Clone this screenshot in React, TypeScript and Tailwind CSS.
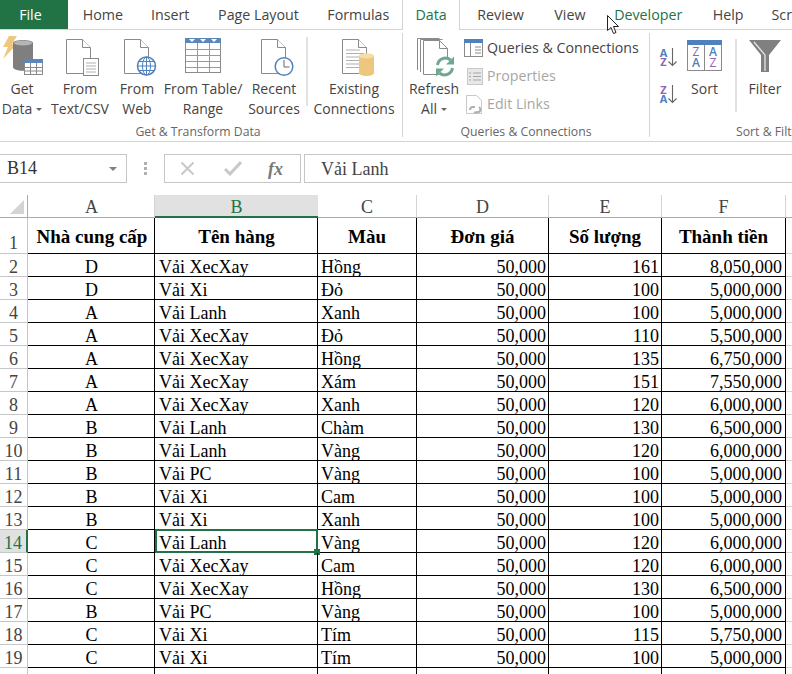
import React from "react";

const ui = "[font-family:'Open_Sans','Noto_Sans',sans-serif]";
const serif = "[font-family:'Liberation_Serif','Times_New_Roman',serif]";

const rows: [string, string, string, string, string, string, string][] = [
  ["2", "D", "Vải XecXay", "Hồng", "50,000", "161", "8,050,000"],
  ["3", "D", "Vải Xi", "Đỏ", "50,000", "100", "5,000,000"],
  ["4", "A", "Vải Lanh", "Xanh", "50,000", "100", "5,000,000"],
  ["5", "A", "Vải XecXay", "Đỏ", "50,000", "110", "5,500,000"],
  ["6", "A", "Vải XecXay", "Hồng", "50,000", "135", "6,750,000"],
  ["7", "A", "Vải XecXay", "Xám", "50,000", "151", "7,550,000"],
  ["8", "A", "Vải XecXay", "Xanh", "50,000", "120", "6,000,000"],
  ["9", "B", "Vải Lanh", "Chàm", "50,000", "130", "6,500,000"],
  ["10", "B", "Vải Lanh", "Vàng", "50,000", "120", "6,000,000"],
  ["11", "B", "Vải PC", "Vàng", "50,000", "100", "5,000,000"],
  ["12", "B", "Vải Xi", "Cam", "50,000", "100", "5,000,000"],
  ["13", "B", "Vải Xi", "Xanh", "50,000", "100", "5,000,000"],
  ["14", "C", "Vải Lanh", "Vàng", "50,000", "120", "6,000,000"],
  ["15", "C", "Vải XecXay", "Cam", "50,000", "120", "6,000,000"],
  ["16", "C", "Vải XecXay", "Hồng", "50,000", "130", "6,500,000"],
  ["17", "B", "Vải PC", "Vàng", "50,000", "100", "5,000,000"],
  ["18", "C", "Vải Xi", "Tím", "50,000", "115", "5,750,000"],
  ["19", "C", "Vải Xi", "Tím", "50,000", "100", "5,000,000"],
];

const GRID = "grid grid-cols-[28px_127px_163px_99px_132px_113px_124px_6px]";

function Doc({ children, w = 34 }: { children?: React.ReactNode; w?: number }) {
  return (
    <svg width={w} height="39" viewBox={`0 0 ${w} 39`} fill="none">
      <path d="M0.500 0.500h16l8 8v26h-24z" fill="#fff" stroke="#8a8a8a" />
      <path d="M16.500 0.500v8h8" stroke="#8a8a8a" fill="#fff" />
      {children}
    </svg>
  );
}

const GetDataIcon = () => (
  <svg width="44" height="40" viewBox="0 0 44 40">
    <path d="M9 0h8l-5 8h5L3 23l5-12H3z" fill="#edc87e" />
    <path d="M13 7c0-4 20-4 20 0v24c0 5-20 5-20 0z" fill="#7f7f7f" />
    <ellipse cx="23" cy="7" rx="9" ry="2.600" fill="#b5b5b5" />
    <rect x="24.500" y="23.500" width="18" height="15" fill="#fff" stroke="#8a8a8a" />
    <rect x="24" y="23" width="19" height="4" fill="#5b87b9" />
    <path d="M24 31.500h19M24 35h19M30.500 27v12M36.500 27v12" stroke="#8a8a8a" />
  </svg>
);

const TableIcon = () => (
  <svg width="36" height="35" viewBox="0 0 36 35">
    <rect x="0.500" y="0.500" width="35" height="34" fill="#fff" stroke="#8a8a8a" />
    <rect x="0" y="0" width="36" height="5" fill="#5b87b9" />
    <path d="M4 1h6l-3 3zM15 1h6l-3 3zM26 1h6l-3 3z" fill="#fff" />
    <path d="M0.500 11.500h35M0.500 17.500h35M0.500 23.500h35M0.500 29.500h35M12.500 5v30M24.500 5v30" stroke="#9a9a9a" />
  </svg>
);

const SortTableIcon = () => (
  <svg width="35" height="31" viewBox="0 0 35 31">
    <rect x="0.500" y="0.500" width="34" height="30" fill="#fff" stroke="#8a8a8a" />
    <rect x="0" y="0" width="35" height="5" fill="#4f81bd" />
    <path d="M17.500 5v26" stroke="#8a8a8a" />
    <g fontFamily="'Open Sans',sans-serif" fontSize="12" textAnchor="middle">
      <text x="9" y="15.500" fill="#9162b4">Z</text>
      <text x="9" y="27" fontWeight="600" fill="#4f81bd">A</text>
      <text x="26" y="15.500" fontWeight="600" fill="#4f81bd">A</text>
      <text x="26" y="27" fill="#9162b4">Z</text>
    </g>
  </svg>
);

const SortSmall = ({ top, bottom, topC, botC }: { top: string; bottom: string; topC: string; botC: string }) => (
  <svg width="18" height="19" viewBox="0 0 18 19">
    <g fontFamily="'Open Sans',sans-serif" fontSize="11" fontWeight="700" textAnchor="middle">
      <text x="4.500" y="9" fill={topC}>{top}</text>
      <text x="4.500" y="18" fill={botC}>{bottom}</text>
    </g>
    <path d="M13.500 0v17.500M9.500 13.500l4 4 4-4" fill="none" stroke="#666" strokeWidth="1.100" />
  </svg>
);

const FilterIcon = () => (
  <svg width="32" height="32" viewBox="0 0 32 32">
    <path d="M0 0h32L20 15v17h-8V15z" fill="#808080" />
    <path d="M5 2l11 13v16" fill="none" stroke="#e4e4e4" strokeWidth="1.300" />
  </svg>
);

const RefreshIcon = () => (
  <svg width="38" height="39" viewBox="0 0 38 39" fill="none">
    <path d="M0.500 32V0.500h22" fill="none" stroke="#8a8a8a" />
    <path d="M3.500 34V1.500h22" fill="none" stroke="#8a8a8a" />
    <path d="M6.500 2.500h16l8 8v26h-24z" fill="#fff" stroke="#8a8a8a" />
    <path d="M22.500 2.500v8h8" stroke="#8a8a8a" />
    <circle cx="28" cy="28.500" r="10" fill="#fff" />
    <path d="M20.500 27a8 8 0 0 1 13-5" stroke="#6fa88f" strokeWidth="3" />
    <path d="M37 18.500v8h-8z" fill="#6fa88f" />
    <path d="M35.500 30a8 8 0 0 1-13 5" stroke="#6fa88f" strokeWidth="3" />
    <path d="M19 38.500v-8h8z" fill="#6fa88f" />
  </svg>
);

function Big({ icon, l1, l2, w, caret, iconClass }: { icon: React.ReactNode; l1: string; l2: string; w: string; caret?: boolean; iconClass?: string }) {
  return (
    <div className={`${w} flex flex-col items-center shrink-0`}>
      <div className={`h-[41px] flex items-start justify-center ${iconClass ?? ""}`}>{icon}</div>
      <div className="mt-[2px] text-[14px] leading-[20px] text-[#444] text-center whitespace-nowrap">
        <div>{l1}</div>
        <div className="flex items-center justify-center gap-[4px]">
          {l2}
          {caret && <span className="w-0 h-0 border-x-[3px] border-x-transparent border-t-[3px] border-t-[#666]" />}
        </div>
      </div>
    </div>
  );
}

function SmallRow({ icon, label, dim }: { icon: React.ReactNode; label: string; dim?: boolean }) {
  return (
    <div className={`h-[28px] flex items-center gap-[4px] text-[14.200px] whitespace-nowrap ${dim ? "text-[#a6a6a6]" : "text-[#444]"}`}>
      <span className="w-[19px] h-[20px] flex items-center justify-end">{icon}</span>
      {label}
    </div>
  );
}

const label = "text-[12.250px] leading-[16px] text-[#666] whitespace-nowrap mt-[1px]";

function Ribbon() {
  return (
    <div className="h-[112px] border-b border-[#d4d4d4] flex pt-[6px]">
      <div className="w-[402px] shrink-0 flex flex-col">
        <div className="flex h-[87px]">
          <Big w="w-[44px]" icon={<GetDataIcon />} l1="Get" l2="Data" caret />
          <Big w="w-[72px]" iconClass="pt-[3px] pl-[6px]" icon={<Doc><rect x="17.500" y="19.500" width="15" height="17" fill="#fff" stroke="#8a8a8a" /><path d="M20 24h10M20 27h10M20 30h10M20 33h10" stroke="#b0b0b0" /></Doc>} l1="From" l2="Text/CSV" />
          <Big w="w-[42px]" iconClass="pt-[3px] pl-[8px]" icon={<Doc><circle cx="22.500" cy="27" r="9" fill="#fff" stroke="#4f81bd" strokeWidth="1.500" /><path d="M13.500 27h18M22.500 18v18M15 22.500h15M15 31.500h15" stroke="#4f81bd" /><ellipse cx="22.500" cy="27" rx="4" ry="9" fill="none" stroke="#4f81bd" /></Doc>} l1="From" l2="Web" />
          <Big w="w-[90px]" iconClass="pt-[2px]" icon={<TableIcon />} l1="From Table/" l2="Range" />
          <Big w="w-[52px]" iconClass="pt-[3px] pl-[7px]" icon={<Doc><circle cx="23" cy="27.500" r="8.800" fill="#fff" stroke="#4f81bd" strokeWidth="1.500" /><path d="M23 21v7h5.500" fill="none" stroke="#666" /></Doc>} l1="Recent" l2="Sources" />
          <div className="w-[2px] h-[69px] mt-[1px] ml-[6px] bg-[#e1e1e1] shrink-0" />
          <Big w="w-[92px]" iconClass="pt-[3px] pl-[10px]" icon={<Doc><path d="M4 11h14M4 14.500h18M4 18h18M4 21.500h14M4 25h14M4 28.500h14" stroke="#b0b0b0" /><path d="M17 17c0-3 15-3 15 0v17c0 4-15 4-15 0z" fill="#eec77f" /><ellipse cx="24.500" cy="17" rx="7.500" ry="2.600" fill="#f6dca8" /></Doc>} l1="Existing" l2="Connections" />
        </div>
        <div className={`${label} text-center pr-[6px]`}>Get &amp; Transform Data</div>
      </div>
      <div className="w-px h-[104px] -mt-[3px] bg-[#d4d4d4] shrink-0" />
      <div className="w-[246px] shrink-0 flex flex-col">
        <div className="h-[87px] flex">
          <div className="pl-[6px]">
            <Big w="w-[50px]" iconClass="pt-[2px] pl-[4px]" icon={<RefreshIcon />} l1="Refresh" l2="All" caret />
          </div>
          <div className="ml-[5px] -mt-[2px] flex flex-col">
            <SmallRow label="Queries & Connections" icon={<svg width="19" height="18"><rect x="0.500" y="0.500" width="18" height="17" fill="#fff" stroke="#8a8a8a" /><rect width="19" height="4" fill="#4f81bd" /><path d="M11 8h6M11 11h6M11 14h6M6.500 4v14" stroke="#8a8a8a" /></svg>} />
            <SmallRow dim label="Properties" icon={<svg width="16" height="17"><rect x="0.500" y="0.500" width="15" height="16" fill="#e8e8e8" stroke="#c8c8c8" /><path d="M6 5h8M6 8.500h8M6 12h8M2 5h2M2 8.500h2M2 12h2" stroke="#a6a6a6" /></svg>} />
            <SmallRow dim label="Edit Links" icon={<svg width="17" height="19"><path d="M0.500 0.500h10l5 5v13h-15z" fill="#fff" stroke="#c8c8c8" /><path d="M4 15a3 3 0 0 1 3-3h2M8 17a3 3 0 0 0 3 0h2a3 3 0 0 0 0-5" fill="none" stroke="#b0b0b0" strokeWidth="2" /></svg>} />
          </div>
        </div>
        <div className={`${label} text-center`}>Queries &amp; Connections</div>
      </div>
      <div className="w-px h-[104px] -mt-[3px] bg-[#d4d4d4] shrink-0" />
      <div className="grow overflow-hidden flex flex-col">
        <div className="h-[87px] flex">
          <div className="pl-[9px] pt-[12px] flex flex-col gap-[18px] w-[28px] shrink-0">
            <SortSmall top="A" bottom="Z" topC="#4f81bd" botC="#9162b4" />
            <SortSmall top="Z" bottom="A" topC="#9162b4" botC="#4f81bd" />
          </div>
          <div className="w-[53px] shrink-0 flex flex-col items-center">
            <div className="h-[41px] pt-[4px]"><SortTableIcon /></div>
            <div className="text-[14px] leading-[20px] text-[#444] mt-[2px]">Sort</div>
          </div>
          <div className="w-[2px] h-[73px] ml-[4px] mt-[3px] bg-[#e1e1e1] shrink-0" />
          <div className="w-[56px] shrink-0 flex flex-col items-center">
            <div className="h-[41px] pt-[4px]"><FilterIcon /></div>
            <div className="text-[14px] leading-[20px] text-[#444] mt-[2px]">Filter</div>
          </div>
        </div>
        <div className={`${label} pl-[86px]`}>Sort &amp; Filter</div>
      </div>
    </div>
  );
}

function FormulaBar() {
  return (
    <div className="h-[29px] mt-[12px] flex items-stretch">
      <div className={`w-[127px] border border-[#c6c6c6] border-l-0 flex items-center justify-between pl-[7px] pr-[9px] ${serif} text-[18px] text-[#333]`}>
        B14
        <span className="w-0 h-0 border-x-[4px] border-x-transparent border-t-[4px] border-t-[#808080]" />
      </div>
      <div className="w-[37px] flex flex-col items-center justify-center gap-[2px]">
        <span className="w-[3px] h-[3px] bg-[#b0b0b0]" />
        <span className="w-[3px] h-[3px] bg-[#b0b0b0]" />
        <span className="w-[3px] h-[3px] bg-[#b0b0b0]" />
      </div>
      <div className="w-[137px] border border-[#c6c6c6] flex items-center">
        <svg width="15" height="15" viewBox="0 0 15 15" className="ml-[15px]">
          <path d="M1.500 1.500l12 12M13.500 1.500l-12 12" stroke="#c8c8c8" strokeWidth="2" fill="none" />
        </svg>
        <svg width="18" height="15" viewBox="0 0 18 15" className="ml-[29px]">
          <path d="M1 8l5 5 11-12" stroke="#c8c8c8" strokeWidth="3" fill="none" />
        </svg>
        <span className={`ml-[26px] ${serif} italic font-bold text-[18px] leading-[18px] text-[#777]`}>fx</span>
      </div>
      <div className="w-[3px]" />
      <div className={`grow border border-[#c6c6c6] border-r-0 flex items-center pl-[16px] pt-[1px] ${serif} text-[18px] text-[#444]`}>Vải Lanh</div>
    </div>
  );
}

function Tab({ w, children, green }: { w: string; children: React.ReactNode; green?: boolean }) {
  return <div className={`${w} flex items-center justify-center ${green ? "text-[#217346]" : ""}`}>{children}</div>;
}

function App() {
  const bc = "border-black";
  return (
    <div className={`w-[792px] h-[674px] overflow-hidden bg-white relative ${ui}`}>
      <div className="h-[30px] flex border-b border-[#d4d4d4] text-[14.250px] text-[#444] whitespace-nowrap">
        <div className="w-[68px] bg-[#217346] text-white flex items-center justify-center pr-[7px]">File</div>
        <Tab w="w-[70px]">Home</Tab>
        <Tab w="w-[65px]">Insert</Tab>
        <Tab w="w-[112px]">Page Layout</Tab>
        <Tab w="w-[88px]">Formulas</Tab>
        <div className="w-[58px] h-[30px] bg-white border-x border-[#d4d4d4] text-[#217346] flex items-center justify-center">Data</div>
        <Tab w="w-[81px]">Review</Tab>
        <Tab w="w-[58px]">View</Tab>
        <Tab w="w-[99px]" green>Developer</Tab>
        <Tab w="w-[61px]">Help</Tab>
        <div className="ml-[13px] flex items-center">Scr</div>
      </div>
      <Ribbon />
      <FormulaBar />
      <div className={`mt-[12px] ${serif} text-[18px] text-black`}>
        <div className={`${GRID} grid-rows-[23px] h-[23px] text-[#444] leading-[24px] text-center`}>
          <div className="border-r border-b border-[#ababab] relative overflow-hidden">
            <span className="absolute right-[3px] bottom-[3px] w-0 h-0 border-l-[14px] border-l-transparent border-b-[14px] border-b-[#d4d4d4]" />
          </div>
          {["A", "B", "C", "D", "E", "F"].map((c) => (
            <div key={c} className={c === "B" ? "bg-[#e1e1e1] border-b-2 border-[#217346] text-[#217346]" : c === "A" ? "border-r border-b border-[#d4d4d4] border-b-[#ababab] pl-[1px]" : "border-r border-b border-[#d4d4d4] border-b-[#ababab]"}>{c}</div>
          ))}
          <div className="border-b border-[#ababab]" />
        </div>
        <div className={`${GRID} grid-rows-[36px] h-[36px] font-bold text-[19px]`}>
          <div className="border-r border-[#c6c6c6] border-b border-b-[#c6c6c6] text-[#444] font-normal text-[18px] text-center leading-[50px]">1</div>
          <div className={`border-r border-b ${bc} text-center leading-[37px] whitespace-nowrap pl-[2px]`}>Nhà cung cấp</div>
          <div className={`border-r border-b ${bc} text-center leading-[37px] pl-[1px]`}>Tên hàng</div>
          <div className={`border-r border-b ${bc} text-center leading-[37px]`}>Màu</div>
          <div className={`border-r border-b ${bc} text-center leading-[37px]`}>Đơn giá</div>
          <div className={`border-r border-b ${bc} text-center leading-[37px]`}>Số lượng</div>
          <div className={`border-r border-b ${bc} text-center leading-[37px]`}>Thành tiền</div>
          <div className="border-b border-[#d4d4d4]" />
        </div>
        {rows.map((r) => {
          const sel = r[0] === "14";
          return (
            <div key={r[0]} className={`${GRID} grid-rows-[23px] h-[23px] leading-[26px] whitespace-nowrap`}>
              <div className={`border-b border-[#c6c6c6] text-center ${sel ? "bg-[#e1e1e1] border-r-2 border-r-[#217346] text-[#217346]" : "border-r text-[#444]"}`}>{r[0]}</div>
              <div className={`border-r border-b ${bc} text-center pl-[1px]`}>{r[1]}</div>
              <div className={`border-r border-b ${bc} pl-[4px] relative`}>
                {r[2]}
                {sel && (
                  <span className="absolute left-0 -top-px w-[163px] h-[24px] border-2 border-[#217346]">
                    <span className="absolute -right-[4px] -bottom-[4px] w-[6px] h-[6px] bg-[#217346]" />
                  </span>
                )}
              </div>
              <div className={`border-r border-b ${bc} pl-[3px]`}>{r[3]}</div>
              <div className={`border-r border-b ${bc} text-right pr-[2px]`}>{r[4]}</div>
              <div className={`border-r border-b ${bc} text-right pr-[2px]`}>{r[5]}</div>
              <div className={`border-r border-b ${bc} text-right pr-[3px]`}>{r[6]}</div>
              <div className="border-b border-[#d4d4d4]" />
            </div>
          );
        })}
        <div className={`${GRID} grid-rows-[23px] h-[23px] leading-[26px]`}>
          <div className="border-r border-[#c6c6c6] text-center text-[#444]">20</div>
          <div className={`border-r ${bc} text-center pl-[1px]`}>C</div>
          <div className={`border-r ${bc} pl-[4px]`}>Vải Xi</div>
          <div className={`border-r ${bc}`} />
          <div className={`border-r ${bc}`} />
          <div className={`border-r ${bc}`} />
          <div className={`border-r ${bc}`} />
          <div />
        </div>
      </div>
      {/* Mouse pointer over the ribbon tabs */}
      <svg className="absolute left-[607px] top-[15px]" width="14" height="20" viewBox="0 0 14 20">
        <path d="M0.500 0.500v15l3.500-3 2.500 6 2.500-1-2.500-6h5z" fill="#fff" stroke="#222" />
      </svg>
    </div>
  );
}

export default App;
